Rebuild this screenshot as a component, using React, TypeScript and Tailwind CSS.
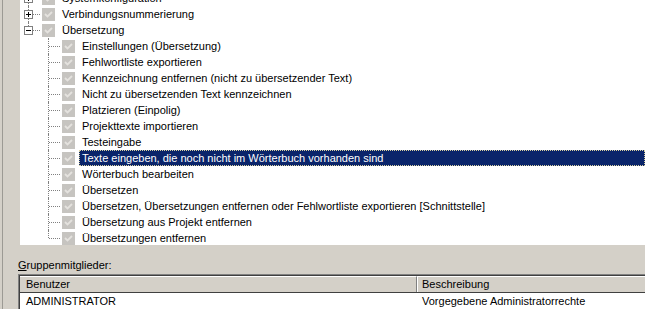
import React from "react";

type Node = {
  label: string;
  level: 0 | 1;
  expander?: "+" | "-";
  last?: boolean;
  selected?: boolean;
};

const nodes: Node[] = [
  { label: "Systemkonfiguration", level: 0, expander: "+" },
  { label: "Verbindungsnummerierung", level: 0, expander: "+" },
  { label: "Übersetzung", level: 0, expander: "-", last: true },
  { label: "Einstellungen (Übersetzung)", level: 1 },
  { label: "Fehlwortliste exportieren", level: 1 },
  { label: "Kennzeichnung entfernen (nicht zu übersetzender Text)", level: 1 },
  { label: "Nicht zu übersetzenden Text kennzeichnen", level: 1 },
  { label: "Platzieren (Einpolig)", level: 1 },
  { label: "Projekttexte importieren", level: 1 },
  { label: "Testeingabe", level: 1 },
  { label: "Texte eingeben, die noch nicht im Wörterbuch vorhanden sind", level: 1, selected: true },
  { label: "Wörterbuch bearbeiten", level: 1 },
  { label: "Übersetzen", level: 1 },
  { label: "Übersetzen, Übersetzungen entfernen oder Fehlwortliste exportieren [Schnittstelle]", level: 1 },
  { label: "Übersetzung aus Projekt entfernen", level: 1 },
  { label: "Übersetzungen entfernen", level: 1, last: true },
];

function Expander({ sign }: { sign: "+" | "-" }) {
  return (
    <div className="absolute left-[4px] top-[4px] h-[9px] w-[9px] border border-[#808080] bg-white">
      <div className="absolute left-[1px] top-[3px] h-px w-[5px] bg-black" />
      {sign === "+" ? <div className="absolute left-[3px] top-[1px] h-[5px] w-px bg-black" /> : null}
    </div>
  );
}

function LineCell({ last, expander }: { last?: boolean; expander?: "+" | "-" }) {
  return (
    <div className="relative h-4 w-5 shrink-0">
      <div
        className={`absolute left-[8px] top-0 w-0 border-l border-dotted border-[#808080] ${
          last ? "h-[8px]" : "h-4"
        }`}
      />
      <div className="absolute left-[9px] top-[8px] h-0 w-[11px] border-t border-dotted border-[#808080]" />
      {expander ? <Expander sign={expander} /> : null}
    </div>
  );
}

function CheckBox() {
  return (
    <div className="ml-[2px] h-[13px] w-[13px] shrink-0 bg-[#c6c4c0]">
      <svg width="13" height="13" viewBox="0 0 13 13">
        <path d="M3 6 L5.5 8.5 L10 4" stroke="#e4e2de" strokeWidth="1.8" fill="none" />
      </svg>
    </div>
  );
}

function TreeRow({ node }: { node: Node }) {
  return (
    <div className="flex h-4 items-center">
      {node.level === 1 ? <div className="h-4 w-5 shrink-0" /> : null}
      <LineCell last={node.last} expander={node.expander} />
      <CheckBox />
      {node.selected ? (
        <div className="ml-[4px] flex h-4 flex-1 items-center whitespace-nowrap border border-dotted border-[#d8d0a0] bg-[#0a246a] pl-[2px] text-white">
          {node.label}
        </div>
      ) : (
        <div className="ml-[4px] whitespace-nowrap pl-[3px] text-black">{node.label}</div>
      )}
    </div>
  );
}

export default function App() {
  return (
    <div
      className="flex h-[309px] w-[645px] overflow-hidden bg-[#d4d0c8] text-[11px] leading-4"
      style={{ fontFamily: '"Liberation Sans", Arial, sans-serif' }}
    >
      <div className="ml-[2px] w-[18px] shrink-0 border-l border-[#9c9a94]" />
      <div className="flex min-w-0 flex-1 flex-col">
        <div className="h-[245px] shrink-0 overflow-hidden bg-white">
          <div className="mt-[-10px]">
            {nodes.map((n) => (
              <TreeRow key={n.label} node={n} />
            ))}
          </div>
        </div>
        <div className="ml-[-2px] mt-[13px] h-[14px] leading-[14px] text-black">
          <span className="underline underline-offset-1">G</span>ruppenmitglieder:
        </div>
        <div className="ml-[-2px] mt-[2px] flex-1 border-l border-t border-[#808080]">
          <div className="h-full border-l border-t border-[#404040] bg-white">
            <div className="flex h-[17px] border-b border-[#404040] bg-[#d4d0c8]">
              <div className="w-[397px] shrink-0 border-r border-[#808080] border-t border-t-white pl-[6px] leading-[15px]">
                Benutzer
              </div>
              <div className="flex-1 border-l border-white border-t border-t-white pl-[4px] leading-[15px]">
                Beschreibung
              </div>
            </div>
            <div className="flex h-4">
              <div className="w-[398px] shrink-0 pl-[6px]">ADMINISTRATOR</div>
              <div className="flex-1 pl-[4px]">Vorgegebene Administratorrechte</div>
            </div>
          </div>
        </div>
      </div>
    </div>
  );
}
